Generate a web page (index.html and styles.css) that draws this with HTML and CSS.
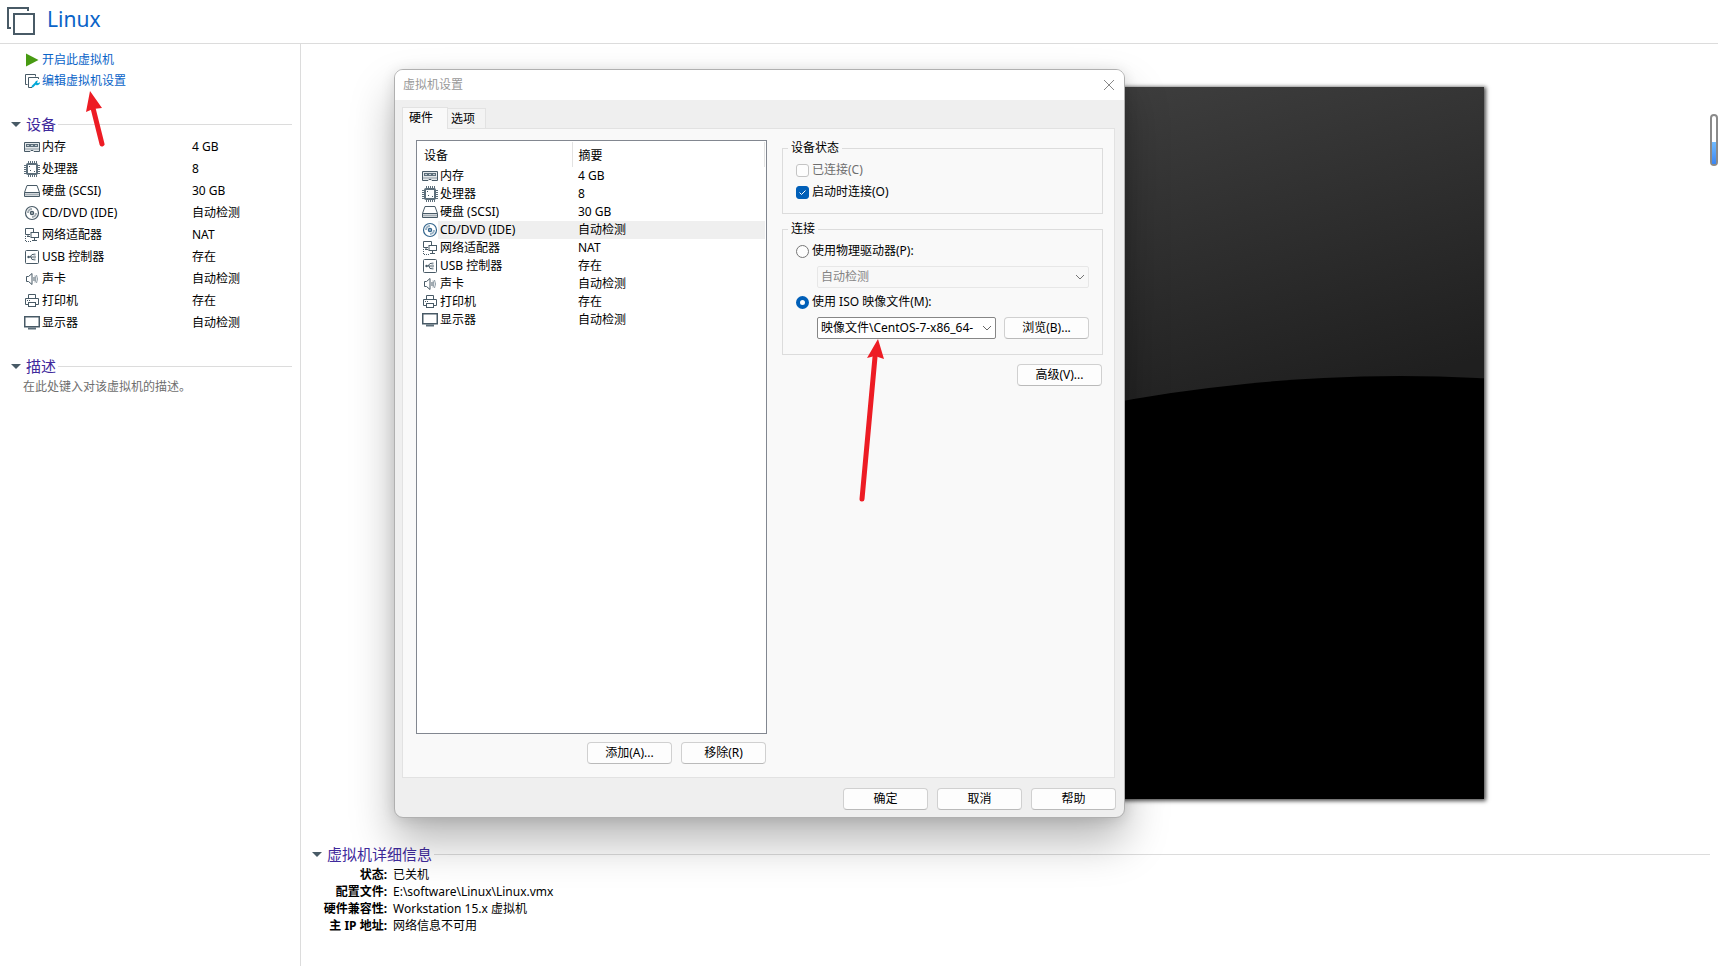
FILE: index.html
```html
<!DOCTYPE html>
<html lang="zh-CN">
<head>
<meta charset="UTF-8">
<meta name="viewport" content="width=device-width, initial-scale=1.0">
<title>Linux</title>
<link rel="stylesheet" href="styles.css">
</head>
<body>
  <!-- Shared icons -->
  <svg class="icon-defs" aria-hidden="true">
    <symbol id="i-memory" viewBox="0 0 16 16">
      <path d="M.5 3.500h15v9H10l-1 -1H7l-1 1H.5z" fill="#e4e8ea" stroke="#485a66"/>
      <path d="M2 5h12v3H2z" fill="#5d6f7b"/>
      <path d="M3 6h2v1H3zM7 6h2v1H7zM11 6h2v1h-2z" fill="#c4ccd1"/>
      <path d="M1 10h14" stroke="#8c99a2"/>
    </symbol>
    <symbol id="i-cpu" viewBox="0 0 16 16">
      <path d="M4.500 0v3M6.500 0v3M8.500 0v3M10.500 0v3M12.500 0v3M4.500 13v3M6.500 13v3M8.500 13v3M10.500 13v3M12.500 13v3M0 4.500h3M0 6.500h3M0 8.500h3M0 10.500h3M0 12.500h3M13 4.500h3M13 6.500h3M13 8.500h3M13 10.500h3M13 12.500h3" stroke="#5d6f7b"/>
      <rect x="3" y="3" width="10" height="10" rx="1" fill="#fff" stroke="#5d6f7b" stroke-width="2"/>
      <path d="M5 5h1v1H5zM10 10h1v1h-1zM6 9h1v1H6z" fill="#485a66"/>
    </symbol>
    <symbol id="i-disk" viewBox="0 0 16 16">
      <path d="M3 2.500h10l2.500 7v4H.5v-4z" fill="none" stroke="#485a66"/>
      <path d="M.5 9.500h15" stroke="#485a66"/>
      <path d="M1 11.500h14" stroke="#a5afb6" stroke-width="2"/>
    </symbol>
    <symbol id="i-cd" viewBox="0 0 16 16">
      <circle cx="8" cy="8" r="6.500" fill="none" stroke="currentColor" stroke-width="1.200"/>
      <circle cx="8" cy="8" r="1.500" fill="none" stroke="currentColor" stroke-width="1.500"/>
      <path d="M4 8a4 4 0 0 1 4-4M12 8a4 4 0 0 1-4 4" fill="none" stroke="currentColor" opacity=".5" stroke-width="2"/>
    </symbol>
    <symbol id="i-network" viewBox="0 0 16 16">
      <path d="M6 7.500H1.500v-6h8V5M4 7.500v2M3 9.500h3" fill="none" stroke="#485a66"/>
      <rect x="7" y="5.500" width="7.500" height="5" fill="#fff" stroke="#485a66"/>
      <path d="M10.500 11v2M8 13.500h5" stroke="#485a66"/>
      <path d="M1.500 9v6M2 14.500h6" stroke="#485a66" stroke-dasharray="1 1"/>
    </symbol>
    <symbol id="i-usb" viewBox="0 0 16 16">
      <rect x="1.500" y="1.500" width="13" height="13" rx="1" fill="none" stroke="#485a66"/>
      <path d="M4 8h8M6 8l2-2.500h2M7 8l1 2.500h2" fill="none" stroke="#485a66"/>
      <circle cx="4.500" cy="8" r="1.200" fill="#485a66"/>
      <path d="M9.500 4.500h2v2h-2zM9.500 9.500h2v2h-2z" fill="#8c99a2"/>
    </symbol>
    <symbol id="i-sound" viewBox="0 0 16 16">
      <path d="M2.500 5.500h2l3.500-3v11l-3.500-3h-2z" fill="none" stroke="#485a66"/>
      <path d="M10 6v4" stroke="#485a66"/>
      <path d="M11 4.500q1.500 3.500 0 7" fill="none" stroke="#8c99a2"/>
      <path d="M12.500 4q2 4 0 8" fill="none" stroke="#8c99a2"/>
    </symbol>
    <symbol id="i-printer" viewBox="0 0 16 16">
      <path d="M4.500 5.500v-4h7v4M4.500 11.500h-3v-6h13v6h-3" fill="none" stroke="#485a66"/>
      <rect x="4.500" y="9.500" width="7" height="4" fill="none" stroke="#485a66"/>
      <path d="M3 7.500h1M5 7.500h1" stroke="#485a66"/>
    </symbol>
    <symbol id="i-display" viewBox="0 0 16 16">
      <rect x=".75" y="1.750" width="14.500" height="10" fill="none" stroke="#485a66" stroke-width="1.500"/>
      <path d="M4 13.500h8" stroke="#5d6f7b" stroke-width="2"/>
    </symbol>
  </svg>

  <header class="topbar">
    <svg class="vm-logo" viewBox="0 0 28 28" aria-hidden="true">
      <path d="M4 21H1V1h20v3" fill="none" stroke="#485a66" stroke-width="2"/>
      <rect x="7" y="7" width="20" height="20" fill="none" stroke="#485a66" stroke-width="2"/>
    </svg>
    <h1>Linux</h1>
  </header>

  <div class="main">
    <aside class="sidebar">
      <nav class="actions">
        <a href="#">
          <svg class="icon" viewBox="0 0 16 16"><path d="M2 1.500L14.500 8 2 14.500z" fill="#479a12"/></svg>
          开启此虚拟机
        </a>
        <a href="#">
          <svg class="icon" viewBox="0 0 16 16">
            <path d="M3.500 11.500h-2v-10h10v2M8 14.500H4.500v-10h10V6" fill="none" stroke="#485a66"/>
            <path d="M8 14l4-4" stroke="#00a8d8" stroke-width="2"/>
            <path d="M11 10.500a3 3 0 0 1 3-3l-1 2 1 .8 2-1a3 3 0 0 1-3.500 3z" fill="#00a8d8"/>
          </svg>
          编辑虚拟机设置
        </a>
      </nav>

      <section class="devices">
        <h2>设备</h2>
        <table class="side-table">
          <tr><td><svg class="icon"><use href="#i-memory"/></svg>内存</td><td>4 GB</td></tr>
          <tr><td><svg class="icon"><use href="#i-cpu"/></svg>处理器</td><td>8</td></tr>
          <tr><td><svg class="icon"><use href="#i-disk"/></svg>硬盘 (SCSI)</td><td>30 GB</td></tr>
          <tr><td><svg class="icon"><use href="#i-cd"/></svg>CD/DVD (IDE)</td><td>自动检测</td></tr>
          <tr><td><svg class="icon"><use href="#i-network"/></svg>网络适配器</td><td>NAT</td></tr>
          <tr><td><svg class="icon"><use href="#i-usb"/></svg>USB 控制器</td><td>存在</td></tr>
          <tr><td><svg class="icon"><use href="#i-sound"/></svg>声卡</td><td>自动检测</td></tr>
          <tr><td><svg class="icon"><use href="#i-printer"/></svg>打印机</td><td>存在</td></tr>
          <tr><td><svg class="icon"><use href="#i-display"/></svg>显示器</td><td>自动检测</td></tr>
        </table>
      </section>

      <section class="description">
        <h2>描述</h2>
        <p>在此处键入对该虚拟机的描述。</p>
      </section>
    </aside>

    <main class="content">
      <svg class="preview" viewBox="0 0 949 712" aria-hidden="true">
        <defs>
          <linearGradient id="screen" gradientUnits="userSpaceOnUse" x1="640" y1="-20" x2="740" y2="330">
            <stop offset="0" stop-color="#3e3e3e"/>
            <stop offset="1" stop-color="#1f1f1f"/>
          </linearGradient>
        </defs>
        <rect width="949" height="712" fill="url(#screen)"/>
        <circle cx="865" cy="1850" r="1561" fill="#000"/>
      </svg>

      <section class="details">
        <h2>虚拟机详细信息</h2>
        <dl>
          <dt>状态:</dt><dd>已关机</dd>
          <dt>配置文件:</dt><dd>E:\software\Linux\Linux.vmx</dd>
          <dt>硬件兼容性:</dt><dd>Workstation 15.x 虚拟机</dd>
          <dt>主 IP 地址:</dt><dd>网络信息不可用</dd>
        </dl>
      </section>
    </main>
  </div>

  <div class="gauge"><span></span></div>

  <!-- Settings window -->
  <div class="dialog" role="dialog" aria-labelledby="dialog-title">
    <div class="titlebar">
      <span id="dialog-title">虚拟机设置</span>
      <button class="close" aria-label="关闭">
        <svg viewBox="0 0 12 12"><path d="M1 1l10 10M11 1L1 11" stroke="#888"/></svg>
      </button>
    </div>
    <div class="dialog-body">
      <div class="tabs" role="tablist">
        <button class="tab active" role="tab" aria-selected="true">硬件</button>
        <button class="tab" role="tab" aria-selected="false">选项</button>
      </div>
      <div class="panel">
        <div class="hardware">
          <div class="list">
            <table>
              <thead>
                <tr><th>设备</th><th>摘要</th></tr>
              </thead>
              <tbody>
                <tr><td><svg class="icon"><use href="#i-memory"/></svg>内存</td><td>4 GB</td></tr>
                <tr><td><svg class="icon"><use href="#i-cpu"/></svg>处理器</td><td>8</td></tr>
                <tr><td><svg class="icon"><use href="#i-disk"/></svg>硬盘 (SCSI)</td><td>30 GB</td></tr>
                <tr class="selected"><td><svg class="icon"><use href="#i-cd"/></svg>CD/DVD (IDE)</td><td>自动检测</td></tr>
                <tr><td><svg class="icon"><use href="#i-network"/></svg>网络适配器</td><td>NAT</td></tr>
                <tr><td><svg class="icon"><use href="#i-usb"/></svg>USB 控制器</td><td>存在</td></tr>
                <tr><td><svg class="icon"><use href="#i-sound"/></svg>声卡</td><td>自动检测</td></tr>
                <tr><td><svg class="icon"><use href="#i-printer"/></svg>打印机</td><td>存在</td></tr>
                <tr><td><svg class="icon"><use href="#i-display"/></svg>显示器</td><td>自动检测</td></tr>
              </tbody>
            </table>
          </div>
          <div class="buttons">
            <button class="btn">添加(A)...</button>
            <button class="btn">移除(R)</button>
          </div>
        </div>

        <div class="options">
          <fieldset class="status">
            <legend>设备状态</legend>
            <label class="off"><input type="checkbox" disabled>已连接(C)</label>
            <label><input type="checkbox" checked>启动时连接(O)</label>
          </fieldset>
          <fieldset class="connection">
            <legend>连接</legend>
            <label><input type="radio" name="source">使用物理驱动器(P):</label>
            <div class="indent">
              <select aria-label="物理驱动器" disabled><option>自动检测</option></select>
            </div>
            <label><input type="radio" name="source" checked>使用 ISO 映像文件(M):</label>
            <div class="indent">
              <select aria-label="ISO 映像文件"><option>映像文件\CentOS-7-x86_64-</option></select>
              <button class="btn">浏览(B)...</button>
            </div>
          </fieldset>
          <button class="btn advanced">高级(V)...</button>
        </div>
      </div>
      <div class="buttons footer">
        <button class="btn">确定</button>
        <button class="btn">取消</button>
        <button class="btn">帮助</button>
      </div>
    </div>
  </div>

  <!-- Red pointers -->
  <svg class="arrow arrow-edit" viewBox="0 0 20 58" aria-hidden="true">
    <path d="M8 17l9 36" stroke="#ed1c24" stroke-width="5" stroke-linecap="round"/>
    <path d="M5 0L1 21l7-3 9-1z" fill="#ed1c24"/>
  </svg>
  <svg class="arrow arrow-iso" viewBox="0 0 26 166" aria-hidden="true">
    <path d="M16 18L3 160" stroke="#ed1c24" stroke-width="5" stroke-linecap="round"/>
    <path d="M19 0L8 19l8-2 9 3z" fill="#ed1c24"/>
  </svg>
</body>
</html>
```
FILE: styles.css
```css
* {
  box-sizing: border-box;
}

body {
  margin: 0;
  min-height: 100vh;
  display: flex;
  flex-direction: column;
  position: relative;
  overflow: hidden;
  background: #fff;
  color: #000;
  font: 12px/16px "Noto Sans", "Noto Sans CJK SC", sans-serif;
}

button, select, input {
  font: inherit;
  color: inherit;
  margin: 0;
}

h1, h2, p, dl, dd {
  margin: 0;
}

table {
  border-collapse: collapse;
}

td, th {
  padding: 0;
  text-align: left;
  font-weight: normal;
}

.icon-defs {
  position: absolute;
  width: 0;
  height: 0;
}

.icon {
  width: 16px;
  height: 16px;
  flex: none;
  vertical-align: top;
  margin-right: 2px;
  color: #485a66;
}

/* Header */
.topbar {
  height: 44px;
  display: flex;
  align-items: center;
  gap: 12px;
  padding: 0 7px 2px;
  border-bottom: 1px solid #dcdcdc;
}

.topbar h1 {
  font-size: 21px;
  line-height: 28px;
  font-weight: normal;
  color: #0a64c8;
  padding-bottom: 3px;
}

.vm-logo {
  width: 28px;
  height: 28px;
}

.main {
  flex: 1;
  display: grid;
  grid-template-columns: 301px 1fr;
}

/* Sidebar */
.sidebar {
  border-right: 1px solid #dcdcdc;
  padding: 5px 8px 0 11px;
}

.actions {
  display: flex;
  flex-direction: column;
  padding-left: 13px;
}

.actions a {
  display: flex;
  align-items: center;
  height: 21px;
  color: #0a64c8;
  text-decoration: none;
}

h2 {
  display: flex;
  align-items: center;
  font-size: 15px;
  line-height: 22px;
  font-weight: normal;
  color: #3f2a9c;
}

/* Collapse triangle */
h2::before {
  content: "";
  border: 5px solid transparent;
  border-top-color: #485a66;
  border-bottom: 0;
  margin-right: 5px;
}

h2::after {
  content: "";
  flex: 1;
  height: 1px;
  margin-left: 2px;
  background: #dcdcdc;
}

.devices {
  margin-top: 22px;
}

.side-table {
  width: 100%;
  margin: 1px 0 0 13px;
}

.side-table td {
  height: 22px;
}

.side-table td:first-child {
  width: 168px;
}

.description {
  margin-top: 21px;
}

.description p {
  padding: 2px 0 0 12px;
  color: #6e6e6e;
}

/* Preview and details */
.content {
  display: flex;
  flex-direction: column;
  padding: 43px 0 32px;
}

.preview {
  width: 67%;
  margin: 0 auto;
  box-shadow: 1px 1px 4px 1px rgba(0, 0, 0, 0.7);
}

.details {
  margin-top: auto;
  padding: 0 8px 0 11px;
}

.details dl {
  display: grid;
  grid-template-columns: 75px 1fr;
  column-gap: 6px;
  line-height: 17px;
  padding-top: 1px;
}

.details dt {
  font-weight: bold;
  text-align: right;
  white-space: nowrap;
}

/* Level gauge at the right edge */
.gauge {
  position: absolute;
  right: 0;
  top: 114px;
  width: 8px;
  height: 52px;
  border: 2px solid #8a8a8a;
  border-radius: 4px;
  display: flex;
  align-items: flex-end;
}

.gauge span {
  width: 100%;
  height: 22px;
  background: linear-gradient(#72bcff, #3a86f4);
}

/* Settings window */
.dialog {
  position: absolute;
  left: 394px;
  top: 69px;
  width: 731px;
  border: 1px solid #b0b0b0;
  border-radius: 9px;
  overflow: hidden;
  background: #efefef;
  box-shadow: 0 24px 44px rgba(0, 0, 0, 0.28), 0 2px 14px rgba(0, 0, 0, 0.12);
}

.titlebar {
  height: 30px;
  display: flex;
  align-items: center;
  justify-content: space-between;
  padding: 0 9px 0 8px;
  background: #fff;
  color: #999;
}

.close {
  display: flex;
  padding: 0;
  border: 0;
  background: none;
}

.close svg {
  width: 12px;
  height: 12px;
}

.dialog-body {
  padding: 7px;
}

.tabs {
  display: flex;
  align-items: flex-end;
}

.tab {
  height: 20px;
  padding: 1px 10px 0 3px;
  border: 1px solid #e2e2e2;
  border-width: 1px 1px 0 0;
  background: #f3f3f3;
}

.tab.active {
  height: 22px;
  padding: 0 14px 1px 6px;
  border-left-width: 1px;
  margin-bottom: -1px;
  position: relative;
  background: #f9f9f9;
}

.panel {
  display: flex;
  gap: 15px;
  margin-right: 2px;
  padding: 11px 11px 13px 13px;
  border: 1px solid #e2e2e2;
  background: #f9f9f9;
}

.hardware {
  width: 351px;
}

.list {
  height: 594px;
  padding: 1px;
  border: 1px solid #828790;
  background: #fff;
}

.list table {
  width: 100%;
}

.list th {
  height: 25px;
  padding: 2px 0 0 6px;
  border-right: 1px solid #e2e2e2;
}

.list th:first-child {
  width: 154px;
}

.list td {
  height: 18px;
  padding-left: 6px;
}

.list td:first-child {
  padding-left: 4px;
}

.list .selected {
  background: linear-gradient(90deg, #fff 20px, #efefef 20px);
}

.list .selected .icon {
  color: #33658c;
}

.buttons {
  display: flex;
  justify-content: flex-end;
  gap: 9px;
  padding: 8px 1px 0 0;
}

.footer {
  padding: 10px 1px 0 0;
}

.btn {
  width: 85px;
  height: 22px;
  padding: 0;
  border: 1px solid #d0d0d0;
  border-bottom-color: #bababa;
  border-radius: 4px;
  background: #fdfdfd;
  line-height: 20px;
  white-space: nowrap;
}

.options {
  flex: 1;
  display: flex;
  flex-direction: column;
}

fieldset {
  min-width: 0;
  margin: 0;
  padding: 0 13px;
  border: 1px solid #dcdcdc;
}

legend {
  margin-left: -8px;
  padding: 0 3px;
}

.status {
  height: 74px;
}

.connection {
  margin-top: 7px;
  height: 134px;
}

label {
  display: flex;
  align-items: center;
  height: 22px;
}

.status label:first-of-type {
  margin-top: 3px;
}

.connection label {
  margin: 3px 0 4px;
}

.off {
  color: #6e6e6e;
}

input {
  appearance: none;
  width: 13px;
  height: 13px;
  margin-right: 3px;
  border: 1px solid #767676;
  background: #fdfdfd;
}

input[type="checkbox"] {
  border-radius: 3px;
}

input:disabled {
  border-color: #c4c4c4;
}

input[type="checkbox"]:checked {
  border-color: #005fb8;
  background: #005fb8 url("data:image/svg+xml,%3Csvg xmlns='http://www.w3.org/2000/svg' viewBox='0 0 11 11'%3E%3Cpath d='M2.500 5.500l2 2 4-4' fill='none' stroke='white'/%3E%3C/svg%3E");
}

input[type="radio"] {
  border-radius: 50%;
}

input[type="radio"]:checked {
  border: 4px solid #005fb8;
}

.indent {
  display: flex;
  align-items: center;
  gap: 8px;
  padding-left: 21px;
}

select {
  appearance: none;
  flex: 1;
  min-width: 0;
  height: 22px;
  padding: 0 20px 0 3px;
  border: 1px solid #868686;
  border-radius: 2px;
  background: #fff url("data:image/svg+xml,%3Csvg xmlns='http://www.w3.org/2000/svg' viewBox='0 0 10 10'%3E%3Cpath d='M1 3l4 4 4-4' fill='none' stroke='%23666'/%3E%3C/svg%3E") no-repeat right 3px center / 10px;
}

select:disabled {
  border-color: #e6e6e6;
  background-color: #f8f8f8;
  color: #787878;
  opacity: 0.9;
}

.advanced {
  align-self: flex-end;
  margin: 9px 1px 0 0;
}

/* Pointers drawn over the window */
.arrow {
  position: absolute;
}

.arrow-edit {
  left: 85px;
  top: 91px;
  width: 20px;
  height: 58px;
}

.arrow-iso {
  left: 859px;
  top: 339px;
  width: 26px;
  height: 166px;
}
```
